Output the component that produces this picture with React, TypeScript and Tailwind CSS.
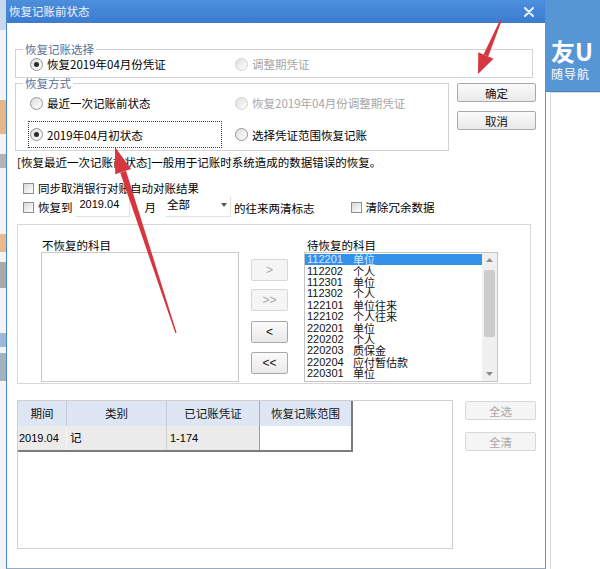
import React from 'react';

const accounts: [string, string][] = [
  ['112201', '单位'],
  ['112202', '个人'],
  ['112301', '单位'],
  ['112302', '个人'],
  ['122101', '单位往来'],
  ['122102', '个人往来'],
  ['220201', '单位'],
  ['220202', '个人'],
  ['220203', '质保金'],
  ['220204', '应付暂估款'],
  ['220301', '单位'],
];

const Radio = ({ checked = false, disabled = false }: { checked?: boolean; disabled?: boolean }) => (
  <span
    className={`flex h-[13px] w-[13px] shrink-0 items-center justify-center rounded-full border bg-linear-to-br from-[#dedede] to-white ${
      disabled ? 'border-[#d2d2d2]' : 'border-[#939393]'
    }`}
  >
    {checked && <span className="h-[5px] w-[5px] rounded-full bg-[#2a2a2a]" />}
  </span>
);

const RadioOption = ({ label, checked, disabled }: { label: string; checked?: boolean; disabled?: boolean }) => (
  <span className="flex items-center gap-[4px] whitespace-nowrap">
    <Radio checked={checked} disabled={disabled} />
    <span className={`leading-[14px] ${disabled ? 'text-[#a6a6a6]' : 'text-black'}`}>{label}</span>
  </span>
);

const Checkbox = ({ className = '' }: { className?: string }) => (
  <span
    className={`block h-[11px] w-[11px] shrink-0 border border-[#8e8e8e] bg-linear-to-br from-[#dadada] to-white ${className}`}
  />
);

const WinButton = ({
  children,
  disabled = false,
  className = '',
}: {
  children: React.ReactNode;
  disabled?: boolean;
  className?: string;
}) => (
  <div
    className={`flex items-center justify-center rounded-[2px] border leading-[14px] ${
      disabled
        ? 'border-[#d8d8d8] bg-[#f5f5f5] text-[#a9a9a9]'
        : 'border-[#a9a9a9] bg-linear-to-b from-[#fbfbfb] to-[#e9e9e9] text-[#111]'
    } ${className}`}
  >
    {children}
  </div>
);

const Legend = ({ children }: { children: React.ReactNode }) => (
  <legend className="ml-[7px] px-[2px] leading-[13px] text-[#56709c]">{children}</legend>
);

export default function App() {
  return (
    <div className="relative flex h-[569px] w-[600px] overflow-hidden bg-white font-['Noto_Sans_CJK_SC','Liberation_Sans',sans-serif] text-[11.5px] text-black">
      {/* background app, left edge */}
      <div className="flex w-[6px] shrink-0 flex-col bg-[#f2f4f7]">
        <div className="h-[30px] bg-[#c6d9ec]" />
        <div className="mt-[70px] h-[34px] bg-[#e7b58a]" />
        <div className="mt-[20px] h-[14px] bg-[#b4b4b4]" />
        <div className="mt-[66px] h-[18px] bg-[#eab98e]" />
        <div className="mt-[10px] h-[26px] bg-[#a9a9a9]" />
        <div className="mt-[45px] h-[14px] bg-[#9cb8d4]" />
        <div className="mt-[6px] h-[28px] bg-[#a5b1bd]" />
      </div>

      {/* dialog */}
      <div className="flex w-[540px] shrink-0 flex-col border-x border-b border-l-[#4a87d2] border-r-[#8a8a8a] border-b-[#9aaabb] bg-white">
        <div className="flex h-[23px] shrink-0 items-center justify-between bg-linear-to-b from-[#4c8fdc] to-[#3b7cd0] pl-[2px] pr-[11px]">
          <span className="leading-[13px] text-[#eef4ff]">恢复记账前状态</span>
          <svg width="10" height="10" viewBox="0 0 10 10">
            <path d="M1 1L9 9M9 1L1 9" stroke="#e8f1ff" strokeWidth="2" strokeLinecap="round" />
          </svg>
        </div>

        <div className="flex-1 pl-[8px] pt-[20px]">
          <fieldset className="w-[518px] border border-[#d2d2d2]">
            <Legend>恢复记账选择</Legend>
            <div className="h-[21px] pt-[1px]">
              <div className="flex h-[14px] items-center">
                <div className="w-[219px] pl-[14px]">
                  <RadioOption checked label="恢复2019年04月份凭证" />
                </div>
                <RadioOption disabled label="调整期凭证" />
              </div>
            </div>
          </fieldset>

          <div className="-mt-px flex items-start">
            <fieldset className="w-[434px] border border-[#d2d2d2] pb-[2px]">
              <Legend>恢复方式</Legend>
              <div className="mt-[6px] flex h-[14px] items-center">
                <div className="w-[219px] pl-[14px]">
                  <RadioOption label="最近一次记账前状态" />
                </div>
                <RadioOption disabled label="恢复2019年04月份调整期凭证" />
              </div>
              <div className="mt-[11px] flex items-center">
                <div className="ml-[12px] flex h-[27px] w-[194px] items-center border border-dotted border-[#444] pl-[1px]">
                  <RadioOption checked label="2019年04月初状态" />
                </div>
                <div className="ml-[13px]">
                  <RadioOption label="选择凭证范围恢复记账" />
                </div>
              </div>
            </fieldset>
            <div className="ml-[8px] mt-[6px] flex flex-col gap-[9px]">
              <WinButton className="h-[19px] w-[79px]">确定</WinButton>
              <WinButton className="h-[19px] w-[79px]">取消</WinButton>
            </div>
          </div>

          <p className="mt-[4px] whitespace-nowrap pl-[2px] leading-[14px]">
            [恢复最近一次记账前状态]一般用于记账时系统造成的数据错误的恢复。
          </p>

          <div className="mt-[12px] flex h-[14px] items-center gap-[4px] pl-[8px]">
            <Checkbox />
            <span className="leading-[14px]">同步取消银行对账自动对账结果</span>
          </div>

          <div className="mt-[2px] flex h-[20px] items-center whitespace-nowrap pl-[8px]">
            <Checkbox />
            <span className="ml-[4px] leading-[14px]">恢复到</span>
            <div className="ml-[3px] h-[20px] w-[54px] border-b border-r border-[#e2e2e2] bg-white pl-[4px] pt-[1px] font-['Liberation_Sans',sans-serif] text-[11px] leading-[13px]">
              2019.04
            </div>
            <span className="ml-[15px] leading-[14px]">月</span>
            <div className="ml-[10px] flex h-[20px] w-[65px] items-start justify-between border-b border-r border-[#e2e2e2] bg-white pl-[1px] pr-[3px] pt-[1px]">
              <span className="leading-[13px]">全部</span>
              <svg width="6" height="4" viewBox="0 0 6 4" className="mt-[5px]">
                <path d="M0 0H6L3 4Z" fill="#555" />
              </svg>
            </div>
            <span className="ml-[3px] pt-[2px] leading-[14px]">的往来两清标志</span>
            <Checkbox className="ml-[36px]" />
            <span className="ml-[4px] leading-[14px]">清除冗余数据</span>
          </div>

          <div className="ml-[2px] mt-[7px] flex w-[514px] border border-[#d6d6d6] pb-[1px]">
            <div className="ml-[23px] pt-[14px]">
              <div className="pl-[1px] leading-[13px]">不恢复的科目</div>
              <div className="h-[130px] w-[198px] border border-[#cacaca] bg-white" />
            </div>

            <div className="ml-[12px] flex flex-col pt-[34px]">
              <WinButton disabled className="h-[22px] w-[37px] font-['Liberation_Sans',sans-serif] text-[12px]">
                &gt;
              </WinButton>
              <WinButton disabled className="mt-[8px] h-[22px] w-[37px] font-['Liberation_Sans',sans-serif] text-[12px]">
                &gt;&gt;
              </WinButton>
              <WinButton className="mt-[10px] h-[22px] w-[37px] font-['Liberation_Sans',sans-serif] text-[12px]">
                &lt;
              </WinButton>
              <WinButton className="mt-[9px] h-[22px] w-[37px] font-['Liberation_Sans',sans-serif] text-[12px]">
                &lt;&lt;
              </WinButton>
            </div>

            <div className="ml-[16px] pt-[14px]">
              <div className="pl-[3px] leading-[13px]">待恢复的科目</div>
              <div className="flex h-[130px] w-[194px] border border-[#c4c4c4] bg-white">
                <div className="flex-1 overflow-hidden pt-[1px]">
                  {accounts.map(([code, name], i) => (
                    <div
                      key={code}
                      className={`flex h-[11.4px] items-center whitespace-nowrap pl-[2px] ${
                        i === 0 ? 'bg-[#3391ea] text-[#d6eaff]' : 'text-[#111]'
                      }`}
                    >
                      <span className="w-[46px] font-['Liberation_Sans',sans-serif] text-[11px] leading-[11px]">{code}</span>
                      <span className="text-[11px] leading-[11px]">{name}</span>
                    </div>
                  ))}
                </div>
                <div className="flex w-[15px] flex-col items-center bg-[#f0f0f0]">
                  <svg width="7" height="4" viewBox="0 0 7 4" className="mt-[5px]">
                    <path d="M0 4L3.5 0L7 4Z" fill="#8a8a8a" />
                  </svg>
                  <div className="mt-[8px] h-[67px] w-[11px] rounded-[2px] bg-[#cdcdcd]" />
                  <div className="flex-1" />
                  <svg width="7" height="4" viewBox="0 0 7 4" className="mb-[5px]">
                    <path d="M0 0L3.5 4L7 0Z" fill="#8a8a8a" />
                  </svg>
                </div>
              </div>
            </div>
          </div>

          <div className="ml-[2px] mt-[16px] flex items-start">
            <div className="h-[149px] w-[436px] border border-[#cfcfcf] bg-white">
              <div className="w-[335px] border-b-2 border-r-2 border-[#7c7c7c]">
                <div className="flex h-[25px] bg-[#dfe6f3] text-[#111]">
                  <div className="flex w-[49px] items-center justify-center border-r border-[#c3cbd9]">期间</div>
                  <div className="flex w-[100px] items-center justify-center border-r border-[#c3cbd9]">类别</div>
                  <div className="flex w-[93px] items-center justify-center border-r border-[#a6acb6]">已记账凭证</div>
                  <div className="flex flex-1 items-center justify-center">恢复记账范围</div>
                </div>
                <div className="flex h-[24px] font-['Liberation_Sans',sans-serif] text-[11px]">
                  <div className="flex w-[49px] items-center border-r border-[#f8f8f8] bg-[#ebebeb] pl-[1px]">2019.04</div>
                  <div className="flex w-[100px] items-center border-r border-[#d2d2d2] bg-[#ebebeb] pl-[3px] font-['Noto_Sans_CJK_SC',sans-serif] text-[11.5px]">
                    记
                  </div>
                  <div className="flex w-[93px] items-center border-r border-[#9c9c9c] bg-[#ebebeb] pl-[3px]">1-174</div>
                  <div className="flex-1 bg-white" />
                </div>
              </div>
            </div>
            <div className="ml-[12px] mt-px flex flex-col gap-[12px]">
              <WinButton disabled className="h-[19px] w-[71px]">全选</WinButton>
              <WinButton disabled className="h-[19px] w-[71px]">全清</WinButton>
            </div>
          </div>
        </div>
      </div>

      {/* background app, right edge */}
      <div className="flex flex-1 flex-col overflow-hidden">
        <div className="h-[92px] shrink-0 border-b border-[#4a84c2] bg-[#5796d5] pl-[5px] pt-[38px] text-white">
          <div className="whitespace-nowrap text-[24px] font-bold leading-[25px]">友U</div>
          <div className="mt-[4px] whitespace-nowrap text-[12px] leading-[14px] tracking-[1px]">随导航</div>
        </div>
        <div className="ml-[4px] flex-1 border-l border-t border-[#dcdcdc] bg-white" />
      </div>

      {/* red annotation arrows */}
      <svg className="pointer-events-none absolute inset-0" width="600" height="569" viewBox="0 0 600 569">
        <polygon points="500.3,19.6 501.7,20.4 488.2,56.6 483.5,54.6" fill="#d5363f" />
        <polygon points="478,74 493.5,58.8 478.3,52.3" fill="#d5363f" />
        <polygon points="175.4,333.3 176.6,332.7 126,170.8 120.2,172.7" fill="#d5363f" />
        <polygon points="115,147 131,169.1 115.2,174.3" fill="#d5363f" />
      </svg>
    </div>
  );
}
